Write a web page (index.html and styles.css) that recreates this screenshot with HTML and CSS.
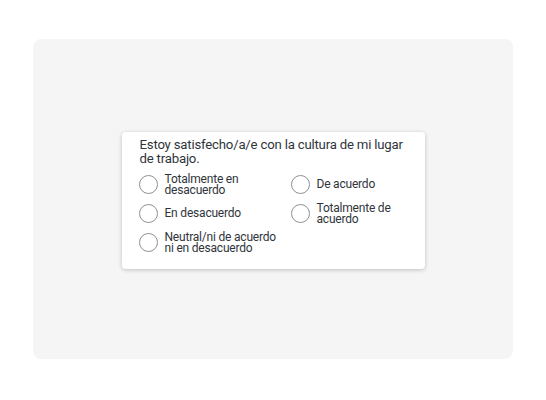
FILE: index.html
```html
<!DOCTYPE html>
<html lang="es">
<head>
<meta charset="utf-8">
<link rel="stylesheet" href="styles.css">
</head>
<body>
<div class="panel">
  <div class="card">
    <p class="question">Estoy satisfecho/a/e con la cultura de mi lugar de trabajo.</p>
    <div class="options">
      <label class="option"><span class="radio"></span><span class="label">Totalmente en desacuerdo</span></label>
      <label class="option"><span class="radio"></span><span class="label">En desacuerdo</span></label>
      <label class="option"><span class="radio"></span><span class="label">Neutral/ni de acuerdo ni en desacuerdo</span></label>
      <label class="option"><span class="radio"></span><span class="label">De acuerdo</span></label>
      <label class="option"><span class="radio"></span><span class="label">Totalmente de acuerdo</span></label>
    </div>
  </div>
</div>
</body>
</html>
```
FILE: styles.css
```css
html, body {
  margin: 0;
  padding: 0;
  background: #ffffff;
}
body {
  font-family: Roboto, "Liberation Sans", sans-serif;
  color: #2f353b;
}
.panel {
  width: 480px;
  height: 320px;
  margin: 39px auto 0;
  background: #f5f5f5;
  border-radius: 8px;
  display: flex;
  align-items: center;
  justify-content: center;
}
.card {
  box-sizing: border-box;
  width: 303px;
  height: 137px;
  margin-top: 3px;
  background: #ffffff;
  border-radius: 4px;
  box-shadow: 0 1px 4px rgba(0, 0, 0, 0.22);
  padding: 6px 12px 0 18px;
}
.question {
  margin: 0;
  font-size: 13.2px;
  line-height: 13.5px;
  letter-spacing: -0.2px;
  color: #2f353b;
}
.options {
  margin-top: 5px;
  margin-left: -1px;
  display: grid;
  grid-template-columns: 152px 1fr;
  grid-template-rows: repeat(3, 29px);
  grid-auto-flow: column;
}
.option {
  display: flex;
  align-items: center;
  gap: 7px;
  padding-right: 4px;
}
.option:nth-child(n+4) {
  padding-right: 6px;
}
.radio {
  box-sizing: border-box;
  flex: none;
  width: 19px;
  height: 19px;
  border: 1px solid #8c9196;
  border-radius: 50%;
  background: #fff;
}
.label {
  flex: 1;
  font-size: 12px;
  line-height: 11px;
  letter-spacing: -0.2px;
  color: #2f353b;
}
```
